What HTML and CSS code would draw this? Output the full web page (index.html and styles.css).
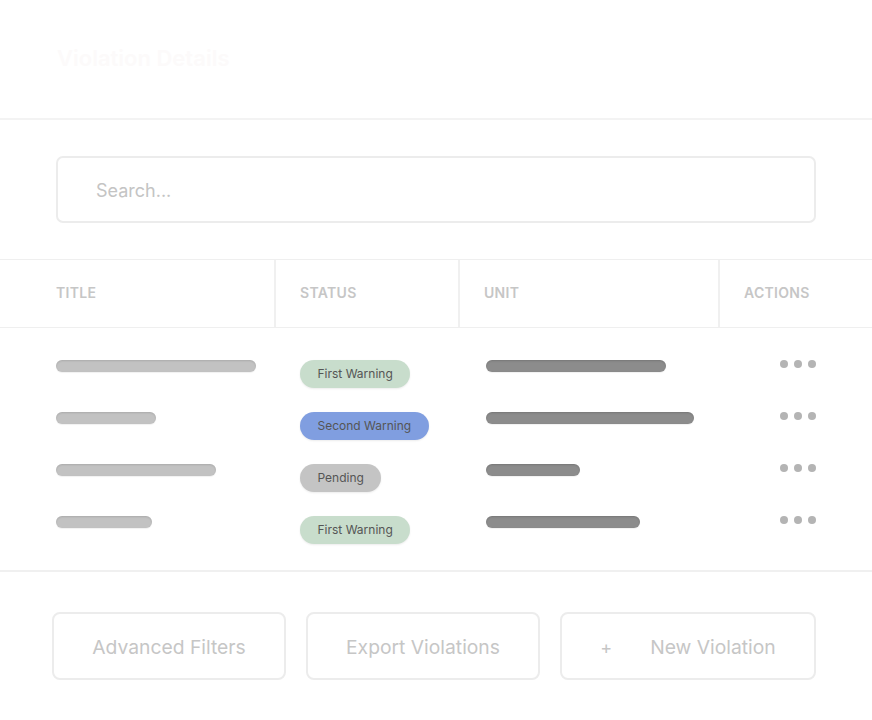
FILE: index.html
```html
<!DOCTYPE html>
<html lang="en">
<head>
<meta charset="utf-8">
<title>Violation Details</title>
<link rel="stylesheet" href="styles.css">
</head>
<body>
<div class="page">
  <header class="header">
    <h1 class="title">Violation Details</h1>
  </header>
  <section class="search-section">
    <div class="search">Search...</div>
  </section>
  <section class="table">
    <div class="thead">
      <div class="th th-title">TITLE</div>
      <div class="th th-status">STATUS</div>
      <div class="th th-unit">UNIT</div>
      <div class="th th-actions">ACTIONS</div>
    </div>
    <div class="tbody">
      <div class="row">
        <div class="cell c-title"><span class="bar bar-light" style="width:200px"></span></div>
        <div class="cell c-status"><span class="badge badge-green">First Warning</span></div>
        <div class="cell c-unit"><span class="bar bar-dark" style="width:180px"></span></div>
        <div class="cell c-actions"><span class="dots"><i></i><i></i><i></i></span></div>
      </div>
      <div class="row">
        <div class="cell c-title"><span class="bar bar-light" style="width:100px"></span></div>
        <div class="cell c-status"><span class="badge badge-blue">Second Warning</span></div>
        <div class="cell c-unit"><span class="bar bar-dark" style="width:208px"></span></div>
        <div class="cell c-actions"><span class="dots"><i></i><i></i><i></i></span></div>
      </div>
      <div class="row">
        <div class="cell c-title"><span class="bar bar-light" style="width:160px"></span></div>
        <div class="cell c-status"><span class="badge badge-grey">Pending</span></div>
        <div class="cell c-unit"><span class="bar bar-dark" style="width:94px"></span></div>
        <div class="cell c-actions"><span class="dots"><i></i><i></i><i></i></span></div>
      </div>
      <div class="row">
        <div class="cell c-title"><span class="bar bar-light" style="width:96px"></span></div>
        <div class="cell c-status"><span class="badge badge-green">First Warning</span></div>
        <div class="cell c-unit"><span class="bar bar-dark" style="width:154px"></span></div>
        <div class="cell c-actions"><span class="dots"><i></i><i></i><i></i></span></div>
      </div>
    </div>
  </section>
  <section class="footer">
    <button class="btn btn-a">Advanced Filters</button>
    <button class="btn btn-b">Export Violations</button>
    <button class="btn btn-c"><span class="plus">+</span><span>New Violation</span></button>
  </section>
</div>
</body>
</html>
```

FILE: styles.css
```css
* { box-sizing: border-box; }
html, body { margin: 0; padding: 0; background: #ffffff; }
body { font-family: Inter, "Noto Sans", "Liberation Sans", sans-serif; }

.page { width: 872px; }

.header {
  height: 120px;
  border-bottom: 2px solid #f3f3f3;
  display: flex;
  align-items: center;
  padding-left: 57px;
  padding-bottom: 2px;
}
.title {
  margin: 0;
  font-size: 22px;
  font-weight: 600;
  color: #fcfafa;
  letter-spacing: 0;
}

.search-section {
  padding: 36px 56px 36px 56px;
  border-bottom: 1px solid #efefef;
}
.search {
  height: 67px;
  border: 2px solid #ececec;
  border-radius: 7px;
  display: flex;
  align-items: center;
  padding-left: 38px;
  padding-top: 2px;
  font-size: 18px;
  color: #c4c4c4;
}

.thead {
  display: grid;
  grid-template-columns: 274px 184px 260px 1fr;
  height: 68px;
  border-bottom: 1px solid #efefef;
}
.th {
  display: flex;
  align-items: center;
  font-size: 14px;
  font-weight: 600;
  color: #c6c6c6;
  letter-spacing: 0.3px;
  padding-left: 24px;
  padding-bottom: 2px;
  border-left: 2px solid #f0f0f0;
}
.th-title { padding-left: 56px; border-left: none; }

.tbody {
  padding: 32px 0 26px 0;
  border-bottom: 2px solid #f0f0f0;
  display: flex;
  flex-direction: column;
  gap: 24px;
}
.row {
  display: grid;
  grid-template-columns: 276px 186px 260px 1fr;
  height: 28px;
  align-items: start;
}
.c-title { padding-left: 56px; }
.c-status { padding-left: 24px; }
.c-unit { padding-left: 24px; }
.c-actions { display: flex; justify-content: flex-end; padding-right: 56px; }

.bar {
  display: block;
  height: 12px;
  border-radius: 6px;
}
.bar-light {
  background: #c2c2c2;
  box-shadow: inset 0 1px 2px rgba(0,0,0,0.12), 0 1px 1px rgba(0,0,0,0.06);
}
.bar-dark {
  background: #8c8c8c;
  box-shadow: inset 0 1px 2px rgba(0,0,0,0.15), 0 1px 1px rgba(0,0,0,0.06);
}

.badge {
  display: inline-flex;
  align-items: center;
  height: 28px;
  padding: 0 17.5px 1px 17.5px;
  border-radius: 14px;
  font-size: 12px;
  color: #555555;
  box-shadow: 0 1px 2px rgba(0,0,0,0.08);
}
.badge-green { background: #c8ddcc; }
.badge-blue { background: #809ee0; }
.badge-grey { background: #c4c4c4; }

.dots {
  display: flex;
  gap: 6px;
  margin-top: 0;
}
.dots i {
  display: block;
  width: 8px;
  height: 8px;
  border-radius: 50%;
  background: #b4b4b4;
}

.footer {
  display: flex;
  gap: 20px;
  padding: 40px 0 0 52px;
}
.btn {
  height: 68px;
  border: 2px solid #ececec;
  border-radius: 8px;
  background: #ffffff;
  font-family: Inter, "Noto Sans", "Liberation Sans", sans-serif;
  font-size: 19.3px;
  color: #c6c6c6;
  display: flex;
  align-items: center;
  justify-content: center;
  padding: 2px 0 0 0;
}
.btn-a, .btn-b { width: 234px; }
.btn-c { width: 256px; gap: 38px; }
.plus { font-size: 18px; color: #c6c6c6; }
```
